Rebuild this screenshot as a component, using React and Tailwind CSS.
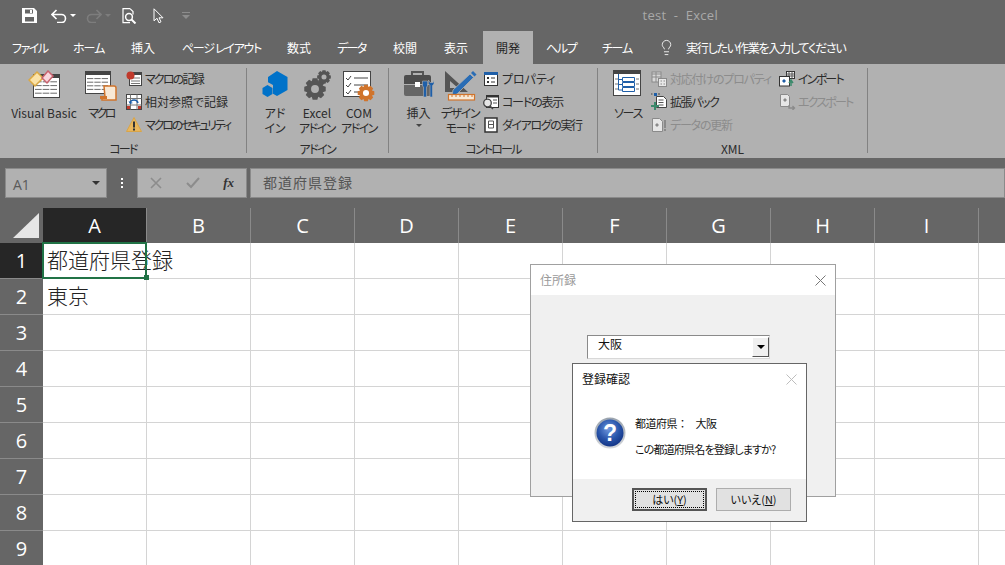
import { Lightbulb } from 'lucide-react'

const TABS = [
  { label: 'ファイル', className: 'w-[60px] pl-[12px] tracking-[-1.5px]' },
  { label: 'ホーム', className: 'w-[58px] pl-[13px] tracking-[-1px]' },
  { label: '挿入', className: 'w-[51px] pl-[13px] [font-feature-settings:normal]' },
  { label: 'ページ レイアウト', className: 'w-[105px] pl-[13px] tracking-[-1.3px]' },
  { label: '数式', className: 'w-[50px] pl-[13px] [font-feature-settings:normal]' },
  { label: 'データ', className: 'w-[56px] pl-[13px] tracking-[-1.6px]' },
  { label: '校閲', className: 'w-[51px] pl-[13px] [font-feature-settings:normal]' },
  { label: '表示', className: 'w-[52px] pl-[13px] [font-feature-settings:normal]' },
  { label: '開発', className: 'w-[50px] pl-[13px] bg-[#b1b1b1] text-[#262626] [font-feature-settings:normal]' },
  { label: 'ヘルプ', className: 'w-[56px] pl-[13px] tracking-[-1.3px]' },
  { label: 'チーム', className: 'w-[55px] pl-[13px] tracking-[-1.3px]' },
]
const COLUMNS = ['A', 'B', 'C', 'D', 'E', 'F', 'G', 'H', 'I', '']
const ROWS = [1, 2, 3, 4, 5, 6, 7, 8, 9]

function gearPath(cx, cy, r, teeth = 8) {
  const pts = []
  const inner = r * 0.76
  for (let i = 0; i < teeth; i++) {
    const a = (i / teeth) * Math.PI * 2
    const w = Math.PI / teeth
    const add = (rad, ang) => pts.push(`${(cx + rad * Math.cos(ang)).toFixed(2)} ${(cy + rad * Math.sin(ang)).toFixed(2)}`)
    add(inner, a - w)
    add(r, a - w * 0.55)
    add(r, a + w * 0.55)
    add(inner, a + w)
  }
  return `M${pts.join('L')}Z`
}

function Gear({ cx, cy, r, color }) {
  return (
    <path fillRule="evenodd" fill={color} d={`${gearPath(cx, cy, r)}M${cx - r * 0.36} ${cy}a${r * 0.36} ${r * 0.36} 0 1 0 ${r * 0.72} 0a${r * 0.36} ${r * 0.36} 0 1 0 ${-r * 0.72} 0Z`} />
  )
}

function TableLines({ x, y, w, h, rows = 4, cols = 3 }) {
  const lines = []
  for (let i = 1; i <= rows; i++) {
    const ly = y + (i * h) / (rows + 1)
    lines.push(<path key={`r${i}`} d={`M${x} ${ly}h${w}`} stroke="#6a6a6a" strokeDasharray={`${w / cols - 1} 1`} />)
  }
  return lines
}

function VbIcon() {
  return (
    <svg width="32" height="30" viewBox="0 0 32 30">
      <rect x="5.5" y="4.5" width="26" height="23" fill="#fff" stroke="#444" />
      <rect x="5" y="4" width="27" height="4" fill="#444" />
      <TableLines x={7} y={8} w={23} h={19} />
      <path d="M1 10 9 2l6 6-8 8z" fill="#fbe3a8" stroke="#dba944" strokeWidth="1.5" />
      <path d="M14 8 20 1l5 5-6 7z" fill="#f8d5dc" stroke="#c9636f" strokeWidth="1.5" />
    </svg>
  )
}

function MacroIcon() {
  return (
    <svg width="34" height="32" viewBox="0 0 34 32">
      <rect x="1.5" y="1.5" width="25" height="22" fill="#fff" stroke="#444" />
      <rect x="1" y="1" width="26" height="4" fill="#444" />
      <TableLines x={3} y={5} w={22} h={18} />
      <path d="M20 16h10c1 0 2 1 2 2v12h-14v-3h3z" fill="#f8e9d6" stroke="#d0742c" strokeWidth="1.5" />
      <path d="M16 26h7v3h-7z" fill="#d0742c" />
    </svg>
  )
}

function RecordIcon() {
  return (
    <svg width="16" height="16" viewBox="0 0 16 16">
      <rect x="3.5" y="3.5" width="12" height="11" fill="#fff" stroke="#444" />
      <rect x="7" y="1" width="9" height="3" fill="#444" />
      <path d="M5 7h9M5 10h9M5 12.500h9" stroke="#777" />
      <circle cx="4.500" cy="4.500" r="4" fill="#c0392b" />
    </svg>
  )
}

function RelativeIcon() {
  return (
    <svg width="16" height="16" viewBox="0 0 16 16">
      <rect x=".5" y=".5" width="15" height="15" fill="#fff" stroke="#444" />
      <path d="M.5 4.500h15M.5 11h15M4.500.5v15M11 .5v15" stroke="#777" />
      <path d="M4 9c1-4 7-4 8 0" fill="none" stroke="#1f5fa8" strokeWidth="1.500" />
      <path d="M2.500 7 4 10l3-1z" fill="#1f5fa8" />
      <path d="M1 12h3v3H1zM12 12h3v3h-3z" fill="#c0392b" />
    </svg>
  )
}

function WarnIcon() {
  return (
    <svg width="16" height="15" viewBox="0 0 16 15">
      <path d="M8 .5 15.500 14.500H.5z" fill="#e9b65c" stroke="#d9a548" />
      <path d="M7 4.500h2v6H7zM7 11.500h2v2H7z" fill="#333" />
    </svg>
  )
}

function AddinIcon() {
  return (
    <svg width="28" height="28" viewBox="0 0 28 28">
      <path d="M16 1l10.500 6v13L16 26l-4-2.300V15l-5-2.800V7z" fill="#0072c9" />
      <path d="M6.500 15l5 3v6l-5 3-5-3v-6z" fill="#0072c9" />
    </svg>
  )
}

function ExcelAddinIcon() {
  return (
    <svg width="28" height="32" viewBox="0 0 28 32">
      <Gear cx={12} cy={19} r={11} color="#555" />
      <Gear cx={21} cy={7} r={7} color="#555" />
    </svg>
  )
}

function ComIcon() {
  return (
    <svg width="34" height="32" viewBox="0 0 34 32">
      <rect x="1.500" y="1.500" width="27" height="25" fill="#fff" stroke="#444" />
      <path d="M4 8l2 2 3-4M4 15l2 2 3-4M4 22l2 2 3-4" fill="none" stroke="#444" />
      <path d="M12 8h14M12 15h14M12 22h8" stroke="#444" />
      <Gear cx={24} cy={23} r={8.500} color="#d0742c" />
    </svg>
  )
}

function InsertIcon() {
  return (
    <svg width="32" height="30" viewBox="0 0 32 30">
      <path d="M9 5V2h11v3" fill="none" stroke="#555" strokeWidth="2" />
      <path d="M1 7a2 2 0 0 1 2-2h23a2 2 0 0 1 2 2v7H1z" fill="#4d4d4d" />
      <path d="M1 15h27v9a2 2 0 0 1-2 2H3a2 2 0 0 1-2-2z" fill="#666" />
      <rect x="12" y="12" width="5" height="5" fill="#fff" />
      <path d="M19.500 11h5v5l-1 1v10h-3V17l-1-1z" fill="#1f5fa8" stroke="#b1b1b1" strokeWidth=".6" />
      <path d="M25.500 10v4l1.500 1.500v11.500h2.500V15.500L31 14v-4l-1 2.500h-3z" fill="#1f5fa8" stroke="#b1b1b1" strokeWidth=".6" />
    </svg>
  )
}

function DesignIcon() {
  return (
    <svg width="34" height="32" viewBox="0 0 34 32">
      <path fillRule="evenodd" d="M2 1 25 22H2zM7 11v7h8z" fill="#555" />
      <path d="M10 20 27 4l3.500 3.500L14 24l-5 1.500z" fill="#2a6db5" stroke="#b1b1b1" strokeWidth=".8" />
      <path d="M28 3l2-2 3.500 3.500-2 2z" fill="#2a6db5" />
      <rect x="5.500" y="24.500" width="26" height="5.500" fill="#f8e9d6" stroke="#d0742c" strokeWidth="1.200" />
      <path d="M9 25v2M13 25v2M17 25v2M21 25v2M25 25v2M29 25v2" stroke="#d0742c" />
    </svg>
  )
}

function PropertyIcon() {
  return (
    <svg width="16" height="16" viewBox="0 0 16 16">
      <rect x="1.500" y="1.500" width="13" height="13" fill="#fff" stroke="#333" />
      <rect x="1" y="1" width="14" height="3" fill="#1f5fa8" />
      <path d="M4 6h2v2H4zM4 10h2v2H4z" fill="#333" />
      <path d="M8 7h4M8 11h4" stroke="#333" />
    </svg>
  )
}

function CodeIcon() {
  return (
    <svg width="18" height="16" viewBox="0 0 18 16">
      <rect x="4.500" y="1.500" width="12" height="12" fill="#fff" stroke="#333" />
      <rect x="4" y="1" width="13" height="2.500" fill="#333" />
      <path d="M11 6h4M11 9h4" stroke="#555" />
      <circle cx="5.500" cy="9" r="3.800" fill="#e5e5e5" stroke="#444" strokeWidth="1.300" />
      <path d="M8 12l3 3" stroke="#444" strokeWidth="1.500" />
    </svg>
  )
}

function DialogIcon() {
  return (
    <svg width="16" height="16" viewBox="0 0 16 16">
      <rect x="2" y="1" width="12" height="14" fill="#fff" stroke="#333" strokeWidth="1.500" />
      <path d="M5.500 4h5v7h-5zM5.500 7.500h5" fill="none" stroke="#555" />
    </svg>
  )
}

function SourceIcon() {
  return (
    <svg width="30" height="28" viewBox="0 0 30 28">
      <rect x=".5" y=".5" width="27" height="25" fill="#fff" stroke="#444" />
      <rect x="0" y="0" width="28" height="4" fill="#444" />
      <path d="M2 9h3M2 14h3M2 19h3M23 9h3M23 14h3M23 19h3" stroke="#777" />
      <path d="M5.500 4v16M5.500 9.500h4M5.500 14.500h4M5.500 20h4" stroke="#1f5fa8" />
      <path d="M9.500 7.500h12v4h-12zM9.500 12.500h12v4h-12zM9.500 17.500h12v4h-12z" fill="#fff" stroke="#1f5fa8" />
    </svg>
  )
}

function MapPropIcon() {
  return (
    <svg width="16" height="16" viewBox="0 0 16 16">
      <rect x="1" y="1" width="9" height="10" fill="#d8d8d8" stroke="#8a8a8a" />
      <path d="M1 3h9M1 6h9M5 1v10" stroke="#8a8a8a" />
      <rect x="7.500" y="7.500" width="8" height="8" fill="#e8e8e8" stroke="#8a8a8a" />
      <path d="M9.500 10h1.500M12.500 10H14M9.500 13h1.500M12.500 13H14" stroke="#8a8a8a" />
    </svg>
  )
}

function ExtPackIcon() {
  return (
    <svg width="17" height="17" viewBox="0 0 17 17">
      <path d="M5.500 3.500h7l3 3v8h-10z" fill="#fff" stroke="#444" />
      <path d="M7.500 7h5M7.500 9.500h5M7.500 12h5" stroke="#555" />
      <path d="M3 0h3v3H3z" fill="#1f5fa8" />
      <path d="M0 1h1.500M7 1h2" stroke="#444" />
      <path d="M3 9h2v3h3v2H5v3H3v-3H0v-2h3z" fill="#3c8a6c" />
    </svg>
  )
}

function RefreshIcon() {
  return (
    <svg width="16" height="16" viewBox="0 0 16 16">
      <path d="M1.500 1.500h7l3 3v10h-10z" fill="#e6e6e6" stroke="#8a8a8a" />
      <path d="M4 8l2-2 2 2-2 2z" fill="#8a8a8a" />
      <path d="M13 3h2v8h-2zM13 12h2v2h-2z" fill="#8a8a8a" />
    </svg>
  )
}

function ImportIcon() {
  return (
    <svg width="17" height="16" viewBox="0 0 17 16">
      <rect x="7.500" y=".5" width="8" height="7" fill="#fff" stroke="#333" />
      <path d="M7.500 3h8M7.500 5h8M10 .5v7M13 .5v7" stroke="#555" />
      <rect x=".5" y="5.500" width="10" height="9.500" fill="#fff" stroke="#333" />
      <path d="M3 10l2-2 2 2-2 2z" fill="#1f5fa8" />
      <path d="M12 15v-5M10 12l2-3 2 3" fill="none" stroke="#3c8a6c" strokeWidth="1.500" />
    </svg>
  )
}

function ExportIcon() {
  return (
    <svg width="17" height="16" viewBox="0 0 17 16">
      <path d="M1.500 .5h7l2 2v10h-9z" fill="#e6e6e6" stroke="#8a8a8a" />
      <path d="M4 6l2-2 2 2-2 2z" fill="#8a8a8a" />
      <path d="M10 11v3h5M13.500 12l2 2-2 2" fill="none" stroke="#8a8a8a" strokeWidth="1.300" />
    </svg>
  )
}

function BigButton({ icon, lines, width, chevron, track = '' }) {
  return (
    <div className={`flex flex-col items-center pt-[3px] ${width}`}>
      <div className="flex h-[35px] items-start justify-center">{icon}</div>
      {lines.map((line) => (
        <span key={line} className={`whitespace-nowrap leading-[15px] ${/^[A-Za-z ]+$/.test(line) ? '' : track}`}>{line}</span>
      ))}
      {chevron && <div className="mt-[4px] h-0 w-0 border-x-[3px] border-t-[3px] border-x-transparent border-t-[#444]" />}
    </div>
  )
}

function SmallButton({ icon, label, disabled, track = '' }) {
  return (
    <div className={`flex h-[23px] items-center gap-[2px] whitespace-nowrap ${disabled ? 'text-[#8c8c8c]' : ''}`}>
      <div className="flex w-[18px] justify-center">{icon}</div>
      <span className={track}>{label}</span>
    </div>
  )
}

function RibbonGroup({ label, width, track = '', children }) {
  return (
    <div className={`flex h-full shrink-0 ${width}`}>
      <div className="flex min-w-0 flex-1 flex-col">
        <div className="flex h-[70px]">{children}</div>
        <div className={`h-[21px] text-center leading-[23px] ${track}`}>{label}</div>
      </div>
      <div className="mt-[1px] mb-[5px] w-px bg-[#828282]" />
    </div>
  )
}

function QuestionIcon() {
  return (
    <svg width="32" height="32" viewBox="0 0 32 32">
      <defs>
        <radialGradient id="qblue" cx="45%" cy="35%" r="70%">
          <stop offset="0%" stopColor="#6f98de" />
          <stop offset="55%" stopColor="#2a56ab" />
          <stop offset="100%" stopColor="#0f2f80" />
        </radialGradient>
        <linearGradient id="qring" x1="0" y1="0" x2="0" y2="1">
          <stop offset="0%" stopColor="#9aa3ad" />
          <stop offset="100%" stopColor="#d5d8dc" />
        </linearGradient>
      </defs>
      <circle cx="16" cy="16" r="15.500" fill="url(#qring)" />
      <circle cx="16" cy="16" r="13.500" fill="url(#qblue)" />
      <text x="16" y="24" textAnchor="middle" fontSize="23" fontWeight="700" fill="#fff" fontFamily="Liberation Sans, sans-serif">?</text>
    </svg>
  )
}

function CloseX({ color, size = 11 }) {
  return (
    <svg width={size} height={size} viewBox="0 0 11 11">
      <path d="M.5.5l10 10M10.500.5l-10 10" stroke={color} />
    </svg>
  )
}

export default function App() {
  return (
    <div className="relative h-[565px] w-[1005px] overflow-hidden bg-white font-['Noto_Sans_CJK_JP','Noto_Sans',sans-serif] text-[12px] text-[#2b2b2b] [font-feature-settings:'palt']">
      {/* Title bar */}
      <div className="flex h-[31px] items-center bg-[#666666] pl-[22px]">
        <svg width="15" height="15" viewBox="0 0 15 15">
          <path fillRule="evenodd" d="M0 0h12l3 3v12H0zM3 1.500v4h8v-4zM3 9v4.500h9V9z" fill="#fff" />
          <path d="M8 2h2v3H8z" fill="#fff" />
        </svg>
        <svg className="ml-[14px]" width="16" height="14" viewBox="0 0 16 14" fill="none" stroke="#fff" strokeWidth="1.600">
          <path d="M1.500 5.500h9a4 4 0 0 1 0 8H6M5.500 1l-4.500 4.500L5.500 10" />
        </svg>
        <div className="ml-[3px] h-0 w-0 border-x-[3px] border-t-[3px] border-x-transparent border-t-white" />
        <svg className="ml-[10px]" width="16" height="14" viewBox="0 0 16 14" fill="none" stroke="#7d7d7d" strokeWidth="1.600">
          <path d="M14.500 5.500h-9a4 4 0 0 0 0 8H10M10.500 1l4.500 4.500L10.500 10" />
        </svg>
        <div className="ml-[3px] h-0 w-0 border-x-[3px] border-t-[3px] border-x-transparent border-t-[#7d7d7d]" />
        <svg className="ml-[11px]" width="15" height="16" viewBox="0 0 15 16" fill="none" stroke="#fff" strokeWidth="1.200">
          <path d="M8 .6H1v14h7M8 .6l3 3v3" />
          <circle cx="7" cy="9" r="3.400" strokeWidth="1.500" />
          <path d="M9.500 11.500l4 4" strokeWidth="2" />
        </svg>
        <svg className="ml-[16px]" width="12" height="16" viewBox="0 0 12 16" fill="none" stroke="#fff">
          <path d="M1 .8v12l3-2.500 2 4.500 2-1-2-4h4z" />
        </svg>
        <div className="ml-[17px] flex flex-col items-center gap-[2px]">
          <div className="h-px w-[8px] bg-[#8c8c8c]" />
          <div className="h-0 w-0 border-x-[4px] border-t-[4px] border-x-transparent border-t-[#8c8c8c]" />
        </div>
        <div className="ml-auto mr-[287px] font-['Open_Sans',sans-serif] text-[13px] tracking-[.3px] whitespace-pre text-[#a9a9a9]">test  -  Excel</div>
      </div>

      {/* Tabs */}
      <div className="flex h-[33px] items-stretch bg-[#666666] text-[12px] text-white">
        {TABS.map((tab) => (
          <div key={tab.label} className={`flex items-center whitespace-nowrap ${tab.className}`}>
            {tab.label}
          </div>
        ))}
        <div className="ml-[14px] flex items-center gap-[11px]">
          <Lightbulb size={17} strokeWidth={1.2} />
          <span className="tracking-[-1.2px]">実行したい作業を入力してください</span>
        </div>
      </div>

      {/* Ribbon */}
      <div className="flex h-[94px] bg-[#b1b1b1] pt-[3px] [&>div]:h-[91px]">
        <RibbonGroup label="コード" width="w-[247px]" track="tracking-[-1.8px]">
          <div className="ml-[8px] flex">
            <BigButton width="w-[72px]" icon={<VbIcon />} lines={['Visual Basic']} />
            <BigButton width="w-[42px]" icon={<MacroIcon />} lines={['マクロ']} track="tracking-[-2.5px]" />
          </div>
          <div className="ml-[3px] flex flex-col">
            <SmallButton icon={<RecordIcon />} label="マクロの記録" track="tracking-[-1.8px]" />
            <SmallButton icon={<RelativeIcon />} label="相対参照で記録" />
            <SmallButton icon={<WarnIcon />} label="マクロのセキュリティ" track="tracking-[-2.2px]" />
          </div>
        </RibbonGroup>
        <RibbonGroup label="アドイン" width="w-[142px]" track="tracking-[-1.5px]">
          <div className="ml-[8px] flex gap-[2px]">
            <BigButton width="w-[40px]" icon={<AddinIcon />} lines={['アド', 'イン']} />
            <BigButton width="w-[40px]" icon={<ExcelAddinIcon />} lines={['Excel', 'アドイン']} track="tracking-[-1.5px]" />
            <BigButton width="w-[40px]" icon={<ComIcon />} lines={['COM', 'アドイン']} track="tracking-[-1.5px]" />
          </div>
        </RibbonGroup>
        <RibbonGroup label="コントロール" width="w-[209px]" track="tracking-[-1.8px]">
          <div className="ml-[10px] flex">
            <BigButton width="w-[39px]" icon={<InsertIcon />} lines={['挿入']} chevron />
            <BigButton width="w-[44px]" icon={<DesignIcon />} lines={['デザイン', 'モード']} track="tracking-[-1.4px]" />
          </div>
          <div className="flex flex-col">
            <SmallButton icon={<PropertyIcon />} label="プロパティ" />
            <SmallButton icon={<CodeIcon />} label="コードの表示" track="tracking-[-1.2px]" />
            <SmallButton icon={<DialogIcon />} label="ダイアログの実行" track="tracking-[-1.4px]" />
          </div>
        </RibbonGroup>
        <RibbonGroup label="XML" width="w-[270px]">
          <div className="ml-[10px] flex">
            <BigButton width="w-[40px]" icon={<SourceIcon />} lines={['ソース']} track="tracking-[-1.3px]" />
          </div>
          <div className="ml-[2px] flex w-[128px] flex-col">
            <SmallButton disabled icon={<MapPropIcon />} label="対応付けのプロパティ" track="tracking-[-1.2px]" />
            <SmallButton icon={<ExtPackIcon />} label="拡張パック" track="tracking-[-1.4px]" />
            <SmallButton disabled icon={<RefreshIcon />} label="データの更新" track="tracking-[-1.2px]" />
          </div>
          <div className="flex flex-col">
            <SmallButton icon={<ImportIcon />} label="インポート" track="tracking-[-1.8px]" />
            <SmallButton disabled icon={<ExportIcon />} label="エクスポート" track="tracking-[-1.8px]" />
          </div>
        </RibbonGroup>
      </div>

      {/* Formula bar */}
      <div className="flex h-[50px] items-center bg-[#666666] pl-[5px]">
        <div className="flex h-[30px] w-[102px] items-center justify-between border border-[#8a8a8a] bg-[#b1b1b1] pr-[6px] pl-[7px] font-['Open_Sans',sans-serif] text-[14px] text-[#5a5a5a]">
          <span className="pt-[2px]">A1</span>
          <div className="h-0 w-0 border-x-[4px] border-t-[4px] border-x-transparent border-t-[#333]" />
        </div>
        <div className="ml-[14px] flex flex-col gap-[2px]">
          <div className="h-[2px] w-[2px] bg-white" />
          <div className="h-[2px] w-[2px] bg-white" />
          <div className="h-[2px] w-[2px] bg-white" />
        </div>
        <div className="ml-[14px] flex h-[30px] w-[110px] items-center justify-between border border-[#8a8a8a] bg-[#b1b1b1] pr-[12px] pl-[12px]">
          <svg width="12" height="12" viewBox="0 0 12 12"><path d="M1 1l10 10M11 1L1 11" stroke="#8c8c8c" strokeWidth="1.600" /></svg>
          <svg width="14" height="12" viewBox="0 0 14 12"><path d="M1 6l4 4 8-9" fill="none" stroke="#8c8c8c" strokeWidth="2" /></svg>
          <span className="font-['Liberation_Serif',serif] text-[13px] font-bold text-[#333] italic">fx</span>
        </div>
        <div className="ml-[3px] flex h-[30px] flex-1 items-center border border-[#8a8a8a] bg-[#b1b1b1] pb-[2px] pl-[12px] text-[14px] tracking-[1px] text-[#555] [font-feature-settings:normal]">
          都道府県登録
        </div>
      </div>

      {/* Column headers */}
      <div className="flex h-[35px] bg-[#666666] font-['Open_Sans',sans-serif] text-[20px] text-white">
        <div className="flex w-[43px] shrink-0 items-end justify-end pr-[4px] pb-[5px]">
          <svg width="26" height="25" viewBox="0 0 26 25"><path d="M26 0v25H0z" fill="#e6e6e6" /></svg>
        </div>
        {COLUMNS.map((col, i) => (
          <div key={i} className={`flex w-[104px] shrink-0 items-center justify-center border-r border-[#8a8a8a] ${i === 0 ? 'bg-[#262626]' : ''}`}>
            {col}
          </div>
        ))}
      </div>

      {/* Sheet */}
      <div className="relative">
        {ROWS.map((row) => (
          <div key={row} className="flex h-[36px]">
            <div className={`flex w-[43px] shrink-0 items-center justify-center border-b border-[#8a8a8a] font-['Open_Sans',sans-serif] text-[20px] text-white ${row === 1 ? 'bg-[#262626]' : 'bg-[#666666]'}`}>
              {row}
            </div>
            {COLUMNS.map((col, i) => (
              <div key={i} className="flex w-[104px] shrink-0 items-center whitespace-nowrap border-r border-b border-[#d4d4d4] pb-[2px] pl-[4px] text-[21px] font-light text-[#222] [font-feature-settings:normal]">
                {i === 0 && row === 1 && '都道府県登録'}
                {i === 0 && row === 2 && '東京'}
              </div>
            ))}
          </div>
        ))}
        {/* active cell */}
        <div className="absolute top-[-1px] left-[42px] h-[37px] w-[105px] border-2 border-[#217346]" />
        <div className="absolute top-[32px] left-[144px] h-[5px] w-[5px] bg-[#217346]" />
      </div>

      {/* 住所録 window */}
      <div className="absolute top-[264px] left-[530px] h-[233px] w-[306px] border border-[#a0a0a0] bg-[#f0f0f0]">
        <div className="flex h-[30px] items-center justify-between bg-white pr-[9px] pl-[9px] text-[#9a9a9a]">
          住所録
          <CloseX color="#777" />
        </div>
        <div className="mt-[40px] ml-[56px] flex h-[24px] w-[183px] items-center justify-between border border-t-[#8a8a8a] border-r-[#d8d8d8] border-b-[#d8d8d8] border-l-[#8a8a8a] bg-white pl-[10px] text-[#111]">
          <span className="pb-[6px]">大阪</span>
          <div className="flex h-[20px] w-[17px] items-center justify-center border border-t-white border-r-[#555] border-b-[#555] border-l-white bg-[#f0f0f0]">
            <div className="h-0 w-0 border-x-[4px] border-t-[4px] border-x-transparent border-t-black" />
          </div>
        </div>
      </div>

      {/* 登録確認 dialog */}
      <div className="absolute top-[363px] left-[572px] flex h-[159px] w-[235px] flex-col border border-[#666] bg-white">
        <div className="flex h-[30px] items-center justify-between pr-[9px] pl-[9px] text-[#111]">
          登録確認
          <CloseX color="#bdbdbd" />
        </div>
        <div className="flex flex-1 pt-[23px] pl-[21px] text-[11px] text-[#111]">
          <QuestionIcon />
          <div className="ml-[9px] flex flex-col">
            <span className="mt-[-2px] leading-[16px] tracking-[-.5px] whitespace-pre [font-feature-settings:normal]">都道府県：  <span className="ml-[4px]">大阪</span></span>
            <span className="mt-[10px] leading-[16px] tracking-[-.8px]">この都道府県名を登録しますか?</span>
          </div>
        </div>
        <div className="flex h-[42px] justify-end gap-[9px] bg-[#f0f0f0] pt-[9px] pr-[15px] text-[11px] text-[#111]">
          <div className="flex h-[23px] w-[75px] items-center justify-center border-2 border-[#555] bg-[#e1e1e1] p-px">
            <div className="flex h-full w-full items-center justify-center border border-dotted border-black">はい(<span className="underline">Y</span>)</div>
          </div>
          <div className="flex h-[23px] w-[75px] items-center justify-center border border-[#adadad] bg-[#e1e1e1]">いいえ(<span className="underline">N</span>)</div>
        </div>
      </div>
    </div>
  )
}
